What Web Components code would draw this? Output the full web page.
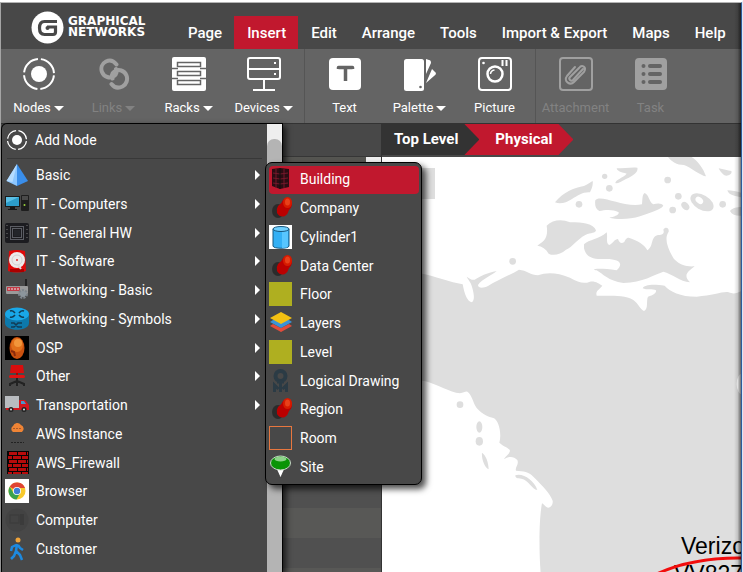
<!DOCTYPE html>
<html lang="en">
<head>
<meta charset="utf-8">
<title>Graphical Networks</title>
<style>
  html, body { height: 100%; }
  body { margin: 0; overflow: hidden; font-family: Roboto, "Liberation Sans", sans-serif; color: #fff; background: #fff; }
</style>
</head>
<body>
<gn-app>
  <gn-brand slot="header"></gn-brand>
  <gn-tab slot="header">Page</gn-tab>
  <gn-tab slot="header" active>Insert</gn-tab>
  <gn-tab slot="header">Edit</gn-tab>
  <gn-tab slot="header">Arrange</gn-tab>
  <gn-tab slot="header">Tools</gn-tab>
  <gn-tab slot="header">Import &amp; Export</gn-tab>
  <gn-tab slot="header">Maps</gn-tab>
  <gn-tab slot="header">Help</gn-tab>

  <gn-tool-group slot="toolbar">
    <gn-tool icon="nodes" caret>Nodes</gn-tool>
    <gn-tool icon="links" caret disabled>Links</gn-tool>
    <gn-tool icon="racks" caret>Racks</gn-tool>
    <gn-tool icon="devices" caret>Devices</gn-tool>
  </gn-tool-group>
  <gn-tool-group slot="toolbar">
    <gn-tool icon="text">Text</gn-tool>
    <gn-tool icon="palette" caret>Palette</gn-tool>
    <gn-tool icon="picture">Picture</gn-tool>
  </gn-tool-group>
  <gn-tool-group slot="toolbar">
    <gn-tool icon="attachment" disabled>Attachment</gn-tool>
    <gn-tool icon="task" disabled>Task</gn-tool>
  </gn-tool-group>

  <gn-crumb slot="crumbs">Top Level</gn-crumb>
  <gn-crumb slot="crumbs" active>Physical</gn-crumb>
  <gn-map slot="map"></gn-map>

  <gn-node-menu slot="menu">
    <gn-item slot="top" icon="nodes" lead>Add Node</gn-item>
    <gn-item icon="pyramid" more>Basic</gn-item>
    <gn-item icon="computers" more>IT - Computers</gn-item>
    <gn-item icon="chip" more>IT - General HW</gn-item>
    <gn-item icon="disk" more>IT - Software</gn-item>
    <gn-item icon="netbasic" more>Networking - Basic</gn-item>
    <gn-item icon="router" more>Networking - Symbols</gn-item>
    <gn-item icon="osp" more>OSP</gn-item>
    <gn-item icon="chair" more>Other</gn-item>
    <gn-item icon="truck" more>Transportation</gn-item>
    <gn-item icon="aws">AWS Instance</gn-item>
    <gn-item icon="firewall">AWS_Firewall</gn-item>
    <gn-item icon="chrome">Browser</gn-item>
    <gn-item icon="computer">Computer</gn-item>
    <gn-item icon="walker">Customer</gn-item>
    <gn-item icon="blank">Base View</gn-item>
  </gn-node-menu>
  <gn-submenu slot="menu">
    <gn-item icon="building" active>Building</gn-item>
    <gn-item icon="pin">Company</gn-item>
    <gn-item icon="cylinder">Cylinder1</gn-item>
    <gn-item icon="pin">Data Center</gn-item>
    <gn-item icon="olive">Floor</gn-item>
    <gn-item icon="layers">Layers</gn-item>
    <gn-item icon="olive">Level</gn-item>
    <gn-item icon="logical">Logical Drawing</gn-item>
    <gn-item icon="pin">Region</gn-item>
    <gn-item icon="room">Room</gn-item>
    <gn-item icon="site">Site</gn-item>
  </gn-submenu>
</gn-app>

<script>
const svg = (w, h, body) => `<svg viewBox="0 0 ${w} ${h}" width="${w}" height="${h}" aria-hidden="true">${body}</svg>`;

const brick = (() => {
  let s = '';
  for (let r = 0; r < 6; r++) for (let c = -1; c < 3; c++) s += `<rect x="${c * 9 + (r % 2 ? 5 : 1)}" y="${r * 4 + 1}" width="8" height="3"/>`;
  return s;
})();

const TOOL = {
  nodes: '<circle cx="17" cy="17" r="8" fill="currentColor"/><circle cx="17" cy="17" r="15" fill="none" stroke="currentColor" stroke-width="2" stroke-dasharray="20.5 3.06" stroke-dashoffset="-1.5"/>',
  links: '<g fill="none" stroke="currentColor" stroke-width="4" stroke-linecap="round"><path d="M19.500 7.500C16 3 12 3 9 4.500 5 6.500 3.500 11 5 15c2 5 8 7 12 4 3-2 3-5 2-7"/><path d="M14.500 27c3.500 4.500 8 4 11 2.500 4-2 5.500-7 4-11-2-5-8-7-12-4-3 2-3 5-2 7"/></g>',
  racks: '<rect x="0" y="0" width="34" height="34" rx="2" fill="currentColor"/><g fill="none" stroke="#646464" stroke-width="1.500"><rect x="5.500" y="5.500" width="23" height="4"/><rect x="5.500" y="14.500" width="23" height="4"/><rect x="5.500" y="23.500" width="23" height="4"/></g><path d="M0 11.500h6M28 11.500h6M0 21.500h6M28 21.500h6" stroke="#646464" stroke-width="1.500"/>',
  devices: '<g fill="none" stroke="currentColor" stroke-width="2"><rect x="1" y="1" width="32" height="21" rx="2"/><path d="M1 12h32M17 22v10M6 33h22"/></g><rect x="27" y="5" width="2" height="2" fill="currentColor"/><rect x="27" y="16" width="2" height="2" fill="currentColor"/>',
  text: '<rect x="1" y="1" width="32" height="32" rx="4" fill="currentColor"/><path d="M10.500 12v-1.500h14V12M17.500 11v13" fill="none" stroke="#646464" stroke-width="3.500" stroke-linejoin="round"/>',
  palette: '<g fill="currentColor"><rect x="1" y="2" width="20" height="32" rx="2.500"/><path d="M23 2l3 1q2 0 2 3l-5 11z"/><path d="M29 12l4 4q0 2-2 3l-8 7z"/></g><circle cx="17.500" cy="30" r="1.300" fill="#646464"/>',
  picture: '<g fill="none" stroke="currentColor" stroke-width="2"><rect x="1" y="1" width="32" height="32" rx="3"/><circle cx="17" cy="17" r="7.500" stroke-width="2.500"/><path d="M24.500 3v6M28.500 3v6"/><path d="M12.500 17a4.500 4.500 0 0 1 4-4" stroke-width="1.500"/></g><circle cx="5.500" cy="6" r="1.300" fill="currentColor"/>',
  attachment: '<g fill="none" stroke="currentColor" stroke-width="2"><rect x="1" y="1" width="32" height="32" rx="3"/><path stroke-linecap="round" d="M24 12l-10 11c-2 2-5-1-3-3l9-9c3-4 8-1 5 4L15 25c-4 4-11-1-7-6l8-9"/></g>',
  task: '<rect x="1" y="1" width="32" height="32" rx="4" fill="currentColor"/><g stroke="#646464" stroke-width="4" stroke-linecap="round"><path d="M9.500 9h0M9.500 17h0M9.500 25h0M16 9h10M16 17h10M16 25h10"/></g>'
};

const ITEM = {
  nodes: '<circle cx="12" cy="12" r="5" fill="#fff"/><circle cx="12" cy="12" r="9.500" fill="none" stroke="#fff" stroke-width="1.300" stroke-dasharray="12.500 2.420" stroke-dashoffset="-1.200"/>',
  pyramid: '<path d="M12 1L1.500 18 12 23z" fill="#8cc6ff"/><path d="M12 1l11 17-11 5z" fill="#3a8eea"/><path d="M12 1L1.500 18l6 1z" fill="#b5dcff"/>',
  computers: '<rect x="0" y="4" width="15" height="11" fill="#1b1b1b"/><rect x="1" y="5" width="13" height="9" fill="#2c9cc9"/><path d="M1 5h13L1 11z" fill="#5bc0e6"/><path d="M5 15h5v2h2v1H3v-1h2z" fill="#151515"/><rect x="16" y="3" width="8" height="16" rx="1" fill="#1e1e1e"/><path d="M17 5h6M17 7h6" stroke="#777"/><circle cx="19.500" cy="13" r="1" fill="#9bd33b"/>',
  chip: '<rect x="0" y="2" width="24" height="20" rx="2" fill="#1c1c20"/><g fill="none" stroke="#9a9fa8"><rect x="5.500" y="5.500" width="13" height="13" stroke-dasharray="1 1"/><rect x="7.500" y="7.500" width="9" height="9" stroke-dasharray="1 1"/></g><rect x="9" y="9" width="6" height="6" fill="#23252a"/><path d="M2 4v16M22 4v16" stroke="#777" stroke-dasharray="1 3"/>',
  disk: '<path d="M4 2q8-2 16 0l1 20q-9 3-18 0z" fill="#e00a0a"/><path d="M5 20h14v3H5z" fill="#a00"/><circle cx="12" cy="11" r="8" fill="#ececec"/><circle cx="12" cy="11" r="5" fill="none" stroke="#d2d2d2"/><circle cx="12" cy="11" r="1" fill="#d33"/><path d="M13 16l3 4" stroke="#ddd" stroke-width="2"/>',
  netbasic: '<rect x="1" y="8" width="22" height="8" rx="1" fill="#9a9a9a"/><rect x="2" y="9" width="13" height="4" fill="#c33b46"/><path d="M3 11h11" stroke="#eee" stroke-dasharray="2 1"/><path d="M21 1v7" stroke="#222" stroke-width="2"/><circle cx="18" cy="16" r="3.500" fill="none" stroke="#7d858c" stroke-width="3" stroke-dasharray="2 1"/><circle cx="18" cy="16" r="3" fill="#8c959c"/>',
  router: '<path d="M0 7v9c0 9 24 9 24 0V7z" fill="#0d79ac"/><ellipse cx="12" cy="7" rx="12" ry="6.500" fill="#19a7e8"/><path d="M5 4c3-1 4 1 5 2M19 4c-3-1-4 1-5 2M5 10c3 1 4-1 5-2M19 10c-3 1-4-1-5-2M6 16h3l4 4h4M6 20h3l4-4h4" stroke="#113c55" stroke-width="1.600" fill="none"/>',
  osp: '<rect width="24" height="24" fill="#000"/><ellipse cx="12" cy="12" rx="7.500" ry="11" fill="#c9500f"/><ellipse cx="12" cy="9" rx="6" ry="7" fill="#e2701b"/><ellipse cx="13" cy="7" rx="4" ry="4" fill="#f2953a"/><path d="M6 15l3 1 1 4" stroke="#8a2a0c" stroke-width="2" fill="none"/>',
  chair: '<path d="M6 1h12l1 8H5z" fill="#d90d0d"/><path d="M12 9v3" stroke="#a00" stroke-width="2"/><rect x="4" y="11" width="16" height="3" rx="1.500" fill="#e01212"/><path d="M12 14v8M12 17l-7 3v2M12 17l7 3v2" stroke="#222" stroke-width="2" fill="none"/>',
  truck: '<rect x="0" y="3" width="14" height="12" fill="#b9bcc0"/><path d="M14 7h6l4 5v5H1v-2h13z" fill="#d3161d"/><path d="M16 8h3l2 3h-5z" fill="#4b96c8"/><circle cx="6" cy="16.500" r="2.500" fill="#222"/><circle cx="19" cy="16.500" r="2.500" fill="#222"/><circle cx="6" cy="16.500" r="1" fill="#ddd"/><circle cx="19" cy="16.500" r="1" fill="#ddd"/>',
  aws: '<path d="M8 10a3.500 3.500 0 0 1 0-6 4.500 4.500 0 0 1 8-1 4 4 0 0 1 1 7z" fill="#ef8435"/><path d="M8 6.500h8" stroke="#a85a2a" stroke-dasharray="2 1"/><path d="M6 20.500h13" stroke="#222" stroke-dasharray="2 1"/>',
  firewall: '<rect x="2" y="0" width="22" height="23" fill="#050505"/><svg x="3" y="0" width="20" height="23"><g fill="#b80b0b">' + brick + '</g></svg>',
  chrome: '<rect width="24" height="24" fill="#fff"/><circle cx="12" cy="12" r="8.500" fill="#f7c92c"/><path d="M12 12L4.700 7.700A8.500 8.500 0 0 1 20 9h-8z" fill="#df4434"/><path d="M4.700 7.700A8.500 8.500 0 0 0 11.500 20.500l4-7-7 .5z" fill="#3ba34c"/><circle cx="12" cy="12" r="4" fill="#fff"/><circle cx="12" cy="12" r="3.200" fill="#3f7fd4"/>',
  computer: '<circle cx="12" cy="12" r="11.500" fill="#434343"/><rect x="5" y="7" width="9" height="8" fill="none" stroke="#3b3b3b"/><rect x="15" y="6" width="4" height="11" fill="#3b3b3b"/>',
  walker: '<circle cx="13" cy="3" r="2.500" fill="#f0a43a"/><path d="M12 7l-1 7 4 4 2 5M11 14l-2 5-3 3M11 8l-4 2-1 4M13 8l2 3 3 2" stroke="#1d8ae0" stroke-width="2.500" fill="none" stroke-linejoin="round"/>',
  blank: '',
  building: '<path d="M3 2l8-1 9 1v18l-9 2-8-3z" fill="#2a0d13"/><path d="M4 6l7 1 8-1M4 11l7 1 8-1M4 16l7 1 8-1M7 2v19M15 2v19" stroke="#75182a" fill="none"/><path d="M11 1v21" stroke="#111"/>',
  pin: '<ellipse cx="9" cy="15" rx="6" ry="7" fill="#202020" opacity=".7"/><path d="M9 10q4-3 5-6 3-3 6-2 3 2 3 7-1 4-3 5-1 4-4 6-5 2-8-3-1-4 1-7z" fill="#bb0000"/><ellipse cx="18.500" cy="6.500" rx="4.500" ry="5.500" fill="#d61a00"/><ellipse cx="18.500" cy="6" rx="2.500" ry="3.500" fill="#e8401a"/>',
  cylinder: '<rect width="23" height="24" fill="#fff"/><path d="M4 4v17c0 3 16 3 16 0V4z" fill="#33b0f5" stroke="#17577f"/><path d="M13 6v17c4 0 6-1 6-2V5z" fill="#57c6ff"/><ellipse cx="12" cy="4" rx="8" ry="2.500" fill="#6fd0ff" stroke="#17577f"/>',
  olive: '<rect width="23" height="24" fill="#afaf20"/>',
  layers: '<path d="M1 15l11 6 11-6-3-2-8 4-8-4z" fill="#e24c3b"/><path d="M1 11l11 6 11-6-3-2H4z" fill="#3b93d8"/><path d="M12 1l11 6-11 6L1 7z" fill="#f3c012"/>',
  logical: '<g fill="none" stroke="#2b3b45"><circle cx="11.500" cy="7" r="5" stroke-width="4"/><path d="M8 13h7M11.500 13v10" stroke-width="3"/><path d="M5.500 23v-7l4 4M17.500 23v-7l-4 4" stroke-width="3"/></g>',
  room: '<rect x=".5" y=".5" width="22" height="23" fill="none" stroke="#e8773f"/>',
  site: '<path d="M7 13h9l-4.500 10z" fill="#fff" stroke="#333" stroke-width=".7"/><ellipse cx="11.500" cy="8" rx="10" ry="7" fill="#0a9406" stroke="#c9d8c9"/><ellipse cx="11.500" cy="4" rx="6" ry="2.500" fill="#8ed28a"/>'
};

function define(name, render) {
  customElements.define(name, class extends HTMLElement {
    constructor() {
      super();
      this.attachShadow({ mode: 'open' }).innerHTML = render(this);
    }
  });
}

define('gn-app', () => `
<style>
  :host { display: flex; flex-direction: column; box-sizing: border-box; height: 100vh; position: relative;
    border-top: 2px solid #fff; border-right: 1px solid #dbe6f5; }
  .frame { flex: 1; min-height: 0; display: flex; flex-direction: column; position: relative;
    border-top: 1px solid #b4b4b4; border-left: 1px solid #a5a5a5; border-right: 1px solid #2c5c9c; }
  .frame::after { content: ""; position: absolute; top: 0; right: 0; bottom: 0; width: 7px; pointer-events: none;
    background: linear-gradient(to left, rgba(0,0,0,.55), rgba(0,0,0,.12) 50%, transparent); }
  header { display: flex; align-items: flex-end; height: 46px; background: #484848; }
  .tools { display: flex; height: 74px; background: #646464; border-bottom: 1px solid #333; }
  .work { flex: 1; min-height: 0; display: flex; position: relative; }
  aside { flex: 0 0 381px; box-sizing: border-box; border-right: 1px solid #333; background: #505050; display: flex; flex-direction: column; }
  .head { height: 32px; background: #484848; border-bottom: 1px solid #363636; }
  .filter { height: 21px; background: #555551; display: flex; justify-content: flex-end; }
  .filter span { width: 15px; background: #eee; }
  .rows { flex: 1; background: repeating-linear-gradient(#505050 0 30px, #585856 30px 60px); }
  main { flex: 1; min-width: 0; display: flex; flex-direction: column; }
  nav { display: flex; height: 33px; box-sizing: border-box; padding-bottom: 2px; background: #484848; }
  ::slotted(gn-map) { flex: 1; }
</style>
<div class="frame">
  <header><slot name="header"></slot></header>
  <div class="tools"><slot name="toolbar"></slot></div>
  <div class="work">
    <aside><div class="head"></div><div class="filter"><span></span></div><div class="rows"></div></aside>
    <main><nav><slot name="crumbs"></slot></nav><slot name="map"></slot></main>
    <slot name="menu"></slot>
  </div>
</div>`);

define('gn-brand', () => `
<style>
  :host { display: flex; align-items: center; gap: 4px; width: 145px; height: 40px; padding: 0 0 4px 30px; box-sizing: border-box; margin-right: 29px; flex: none; }
  svg { display: block; flex: none; }
  div { font: bold 12px/11px "DejaVu Sans", sans-serif; }
  span { display: block; }
</style>
${svg(33, 33, '<circle cx="16.500" cy="16.500" r="16" fill="#fff"/><path d="M26 10.500H13.500q-5 0-5 6.500t5 6.500H22q2.500 0 2.500-2.500v-5h-8.500" fill="none" stroke="#484848" stroke-width="3.200"/><circle cx="16.500" cy="17" r="2" fill="#484848"/>')}
<div><span>GRAPHICAL</span><span>NETWORKS</span></div>`);

define('gn-tab', () => `
<style>
  :host { display: block; flex: none; }
  button { display: block; height: 33px; padding: 0 12px 0 13px; border: 0; background: none; color: #fff; font: 500 15px/35px Roboto, sans-serif; white-space: nowrap; }
  :host([active]) button { background: #c1182e; }
</style>
<button type="button"><slot></slot></button>`);

define('gn-tool-group', () => `
<style>
  :host { display: flex; padding: 0 3px 0 2px; border-right: 1px solid #555; }
  :host(:first-of-type) { padding-left: 0; }
  :host(:last-of-type) { border: 0; }
</style><slot></slot>`);

define('gn-tool', el => `
<style>
  :host { display: block; width: 75px; }
  button { display: flex; flex-direction: column; align-items: center; gap: 9px; width: 100%; padding: 8px 0 0; border: 0; background: none; color: #fff; font: 13px/16px Roboto, sans-serif; white-space: nowrap; }
  button:disabled { color: #a0a0a0; }
  button:disabled span { color: #828282; }
  span { display: flex; align-items: center; gap: 3px; }
  i { border: 5px solid transparent; border-top-color: currentColor; border-bottom: 0; }
  svg { display: block; }
</style>
<button type="button" ${el.hasAttribute('disabled') ? 'disabled' : ''}>${svg(34, 34, TOOL[el.getAttribute('icon')])}<span><slot></slot>${el.hasAttribute('caret') ? '<i></i>' : ''}</span></button>`);

define('gn-crumb', () => `
<style>
  :host { display: block; position: relative; z-index: 1; }
  :host([active]) { margin-left: -15px; z-index: 0; }
  a { display: block; height: 31px; padding: 0 21px 0 12px; background: #333; color: #fff; text-decoration: none; font: bold 15px/30px Roboto, sans-serif; white-space: nowrap;
    clip-path: polygon(0 0, calc(100% - 15px) 0, 100% 50%, calc(100% - 15px) 100%, 0 100%); }
  :host([active]) a { background: #c1182e; padding-left: 31px; }
</style>
<a href="#"><slot></slot></a>`);

define('gn-item', el => `
<style>
  :host { display: block; height: 29px; }
  :host(:nth-of-type(4n+1)) { height: 28px; }
  button { display: flex; align-items: center; gap: 7px; width: 100%; height: 100%; padding: 0 0 2px; border: 0; border-radius: 4px; background: none; color: #fff; font: 14px/20px Roboto, sans-serif; text-align: left; white-space: nowrap; }
  :host([lead]) { height: 33px; }
  :host([lead]) button { gap: 6px; }
  :host([active]) button { background: #c1182e; }
  span { flex: 1; }
  i { margin-right: 7px; border: 5px solid transparent; border-left-color: #fff; border-right: 0; }
  svg { display: block; flex: none; }
</style>
<button type="button">${svg(24, 24, ITEM[el.getAttribute('icon')])}<span><slot></slot></span>${el.hasAttribute('more') ? '<i></i>' : ''}</button>`);

define('gn-node-menu', () => `
<style>
  :host { position: absolute; left: 0; top: -1px; bottom: 0; width: 282px; box-sizing: border-box; display: flex; overflow: hidden;
    background: #484848; border: 1px solid #000; border-bottom: 0; border-radius: 6px 0 0 0; box-shadow: 3px 3px 6px rgba(0,0,0,.7); }
  .list { flex: 1; overflow: hidden; padding: 0 0 0 3px; }
  .line { height: 1px; margin: 1px 5px 2px 2px; background: #383838; }
  .bar { flex: 0 0 15px; padding-top: 15px; background: #eee; display: flex; }
  .thumb { flex: 1; border-radius: 7px 7px 0 0; background: #b4b4b4; }
</style>
<div class="list"><slot name="top"></slot><div class="line"></div><slot></slot></div>
<div class="bar"><div class="thumb"></div></div>`);

define('gn-submenu', () => `
<style>
  :host { position: absolute; left: 264px; top: 38px; width: 157px; box-sizing: border-box; padding: 3px 2px 2px 3px;
    background: #484848; border: 1px solid #000; border-radius: 7px; box-shadow: 4px 4px 6px rgba(0,0,0,.7); }
</style><slot></slot>`);

define('gn-map', () => `
<style>
  :host { display: block; min-height: 0; overflow: hidden; background: #fff; }
  svg { display: block; width: 100%; height: 100%; }
  text { font: 23px "Liberation Sans", Arial, sans-serif; fill: #000; }
</style>
<svg aria-label="Map">
  <rect x="0" y="11" width="53" height="31" fill="#dedede"/>
  <g transform="translate(-12 -42) scale(.33333)" fill="#dedede">
    <path d="M0 440C70 455 100 460 150 475 200 485 240 502 278 508 284 540 292 560 306 562 318 552 308 520 302 505 296 494 292 490 290 485 300 492 306 496 314 494 330 484 350 474 380 468 368 480 336 492 324 510 324 520 340 520 354 513 380 496 420 480 447 464 470 466 482 480 504 481 530 472 560 472 600 488 626 502 640 508 660 500 678 498 686 506 697 512 690 522 675 528 680 542 710 544 760 538 790 555 805 566 812 584 822 588 836 582 828 556 834 545 852 540 860 532 858 526 848 520 830 526 818 520 822 510 846 506 884 512 900 530 930 545 980 545 1030 542 1060 528 1076 532 1094 540 1105 532 1120 526V1400H0z"/>
    <path d="M555 262C580 230 615 218 642 213 655 207 664 200 668 198 670 210 665 222 660 232 640 230 622 242 606 252 588 264 570 268 555 262zM740 160C760 160 785 156 802 158 806 170 790 182 768 192 754 200 740 208 736 204 736 194 760 188 770 176 756 172 742 170 740 160zM894 126H965C985 140 1000 160 1008 184 995 184 960 156 942 150 920 150 905 140 894 126zM1046 160C1060 162 1074 168 1084 168 1088 178 1072 186 1062 180 1054 174 1048 166 1046 160zM1072 226C1088 226 1110 232 1120 236V248C1100 244 1076 242 1072 226zM1080 288C1090 276 1106 276 1120 276V302C1100 304 1086 300 1080 288zM676 256C684 244 710 254 738 260 760 266 790 274 816 268 818 252 816 240 824 234 838 240 836 260 850 268 862 264 876 264 880 272 870 286 840 292 810 304 780 314 740 314 718 308 732 306 748 300 746 292 730 282 705 284 688 288 676 282 674 268 676 256zM502 392C520 380 536 372 530 332 548 314 576 312 600 322 640 322 670 326 678 346 676 356 664 352 646 360 620 374 608 396 588 404 572 418 550 424 536 416 528 402 516 394 502 392zM642 388C656 374 690 372 710 352 714 366 706 384 718 390 730 384 734 372 744 372 748 384 754 386 762 382 766 376 768 368 776 368 800 376 824 388 832 406 852 394 840 366 864 360 884 360 882 350 880 344 886 334 898 338 896 350 882 370 892 400 912 432 930 450 950 456 974 454 954 470 938 480 960 502 930 500 906 476 880 470 850 480 820 502 760 504 714 498 698 476 680 466 656 462 690 458 740 466 762 446 750 430 700 432 654 434 646 416 642 400 642 388zM644 376C656 360 666 358 676 360 672 372 656 378 644 376zM958 366C976 372 988 376 1000 370 996 358 992 352 990 346 1012 346 1040 340 1052 328 1062 340 1056 360 1064 374 1072 388 1080 410 1062 410 1040 416 1028 414 1018 404 996 398 976 384 958 366zM1016 494C1024 484 1034 478 1036 472 1054 474 1062 488 1080 486 1098 480 1080 456 1082 444 1092 420 1106 416 1120 412V490C1100 492 1096 502 1086 510 1064 510 1040 520 1024 510 1022 504 1018 500 1016 494zM1074 530C1080 518 1092 510 1104 494 1106 510 1098 528 1088 532zM328 514C334 504 344 502 356 504 352 512 340 518 328 514zM834 524C842 516 854 520 852 530 842 534 836 530 834 524z"/>
    <g><circle cx="704" cy="184" r="8"/><circle cx="718" cy="220" r="10"/><circle cx="627" cy="268" r="10"/><circle cx="893" cy="195" r="10"/><circle cx="925" cy="244" r="10"/><circle cx="908" cy="285" r="10"/><circle cx="1058" cy="268" r="10"/><circle cx="428" cy="439" r="10"/><ellipse cx="946" cy="273" rx="10" ry="14" transform="rotate(-42 946 273)"/><ellipse cx="996" cy="262" rx="38" ry="22" transform="rotate(30 996 262)"/></g>
    <ellipse cx="988" cy="256" rx="13" ry="9" transform="rotate(42 988 256)" fill="#fff"/>
  </g>
  <g transform="translate(-12 183) scale(.33333)" fill="#fff">
    <path d="M0 100C60 110 110 115 166 124 200 132 240 158 270 160 280 158 286 154 292 155 306 164 308 186 320 204 340 226 356 230 370 234 386 240 396 280 388 308 400 320 416 322 420 332 418 344 404 350 402 358 412 350 430 346 442 360 448 374 434 382 438 392 460 394 476 394 490 410 520 440 540 460 548 482 550 496 540 504 534 503 526 502 520 490 516 490 508 530 506 620 512 700H0z"/>
    <g fill="#dedede"><circle cx="270" cy="194" r="10"/><ellipse cx="328" cy="261" rx="9" ry="17"/><ellipse cx="328" cy="304" rx="11" ry="13"/><path d="M336 338C348 346 356 368 356 388 344 384 334 356 336 338zM436 406C458 398 492 420 502 450 486 448 476 420 454 416 442 416 436 414 436 406z"/></g>
    <ellipse cx="1118" cy="132" rx="18" ry="32"/>
  </g>
  <text x="299" y="397">Verizon</text>
  <text x="292" y="425">VV827</text>
  <ellipse cx="356" cy="464" rx="122" ry="63" fill="none" stroke="#f20d0d" stroke-width="3"/>
</svg>`);
</script>
</body>
</html>
